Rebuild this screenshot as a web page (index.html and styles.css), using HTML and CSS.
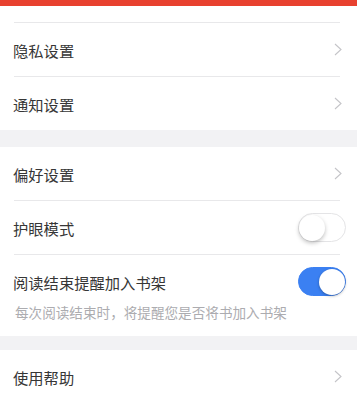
FILE: index.html
```html
<!DOCTYPE html>
<html lang="zh-CN">
<head>
<meta charset="utf-8">
<link rel="stylesheet" href="styles.css">
</head>
<body>
<div class="topbar"></div>
<div class="top-space"></div>
<div class="divider"></div>
<div class="group">
  <div class="row"><span class="label">隐私设置</span><svg class="chev" width="8" height="13" viewBox="0 0 8 13"><polyline points="1,1 7,6.5 1,12" fill="none" stroke="#c4c4c8" stroke-width="1.1"/></svg></div>
  <div class="divider"></div>
  <div class="row"><span class="label">通知设置</span><svg class="chev" width="8" height="13" viewBox="0 0 8 13"><polyline points="1,1 7,6.5 1,12" fill="none" stroke="#c4c4c8" stroke-width="1.1"/></svg></div>
</div>
<div class="gap"></div>
<div class="group">
  <div class="row"><span class="label">偏好设置</span><svg class="chev" width="8" height="13" viewBox="0 0 8 13"><polyline points="1,1 7,6.5 1,12" fill="none" stroke="#c4c4c8" stroke-width="1.1"/></svg></div>
  <div class="divider"></div>
  <div class="row"><span class="label">护眼模式</span><span class="toggle"><span class="knob"></span></span></div>
  <div class="divider"></div>
  <div class="row-tall">
    <div class="row-head"><span class="label">阅读结束提醒加入书架</span><span class="toggle on"><span class="knob"></span></span></div>
    <div class="sub">每次阅读结束时，将提醒您是否将书加入书架</div>
  </div>
</div>
<div class="gap gap-small"></div>
<div class="group">
  <div class="row"><span class="label">使用帮助</span><svg class="chev" width="8" height="13" viewBox="0 0 8 13"><polyline points="1,1 7,6.5 1,12" fill="none" stroke="#c4c4c8" stroke-width="1.1"/></svg></div>
</div>
</body>
</html>
```
FILE: styles.css
```css
html, body {
  margin: 0;
  padding: 0;
  background: #ffffff;
  font-family: "Noto Sans CJK SC", "Noto Sans", sans-serif;
  color: #333333;
  overflow: hidden;
}
.topbar {
  height: 6px;
  background: #e8412f;
}
.top-space {
  height: 16px;
}
.divider {
  height: 1px;
  background: #e8e8ea;
  margin: 0 17px 0 14px;
}
.group {
  background: #ffffff;
}
.row {
  height: 53px;
  display: flex;
  align-items: center;
  justify-content: space-between;
  padding: 0 14px 0 13px;
}
.label {
  font-size: 15.3px;
  line-height: 22px;
  color: #363636;
}
.chev {
  display: block;
  margin-right: 1px;
}
.gap {
  height: 17px;
  background: #f2f2f4;
}
.gap-small {
  height: 14px;
}
.row-tall {
  padding: 12px 11px 14px 13px;
}
.row-head {
  display: flex;
  align-items: center;
  justify-content: space-between;
  height: 29px;
}
.row .toggle {
  margin-right: -3px;
}
.toggle {
  box-sizing: border-box;
  width: 48px;
  height: 29px;
  border-radius: 15px;
  background: #ffffff;
  border: 1.5px solid #e4e4e6;
  display: flex;
  align-items: center;
  padding: 0;
}
.knob {
  width: 26px;
  height: 26px;
  border-radius: 50%;
  background: #ffffff;
  box-shadow: 0 2px 4px rgba(0, 0, 0, 0.25);
}
.toggle.on {
  background: #3b80f2;
  border-color: #3b80f2;
  justify-content: flex-end;
}
.toggle.on .knob {
  box-shadow: 0 1px 3px rgba(0, 0, 0, 0.3);
}
.sub {
  margin-top: 6px;
  font-size: 13.6px;
  line-height: 20px;
  color: #acacb0;
  padding-left: 2px;
}
```
